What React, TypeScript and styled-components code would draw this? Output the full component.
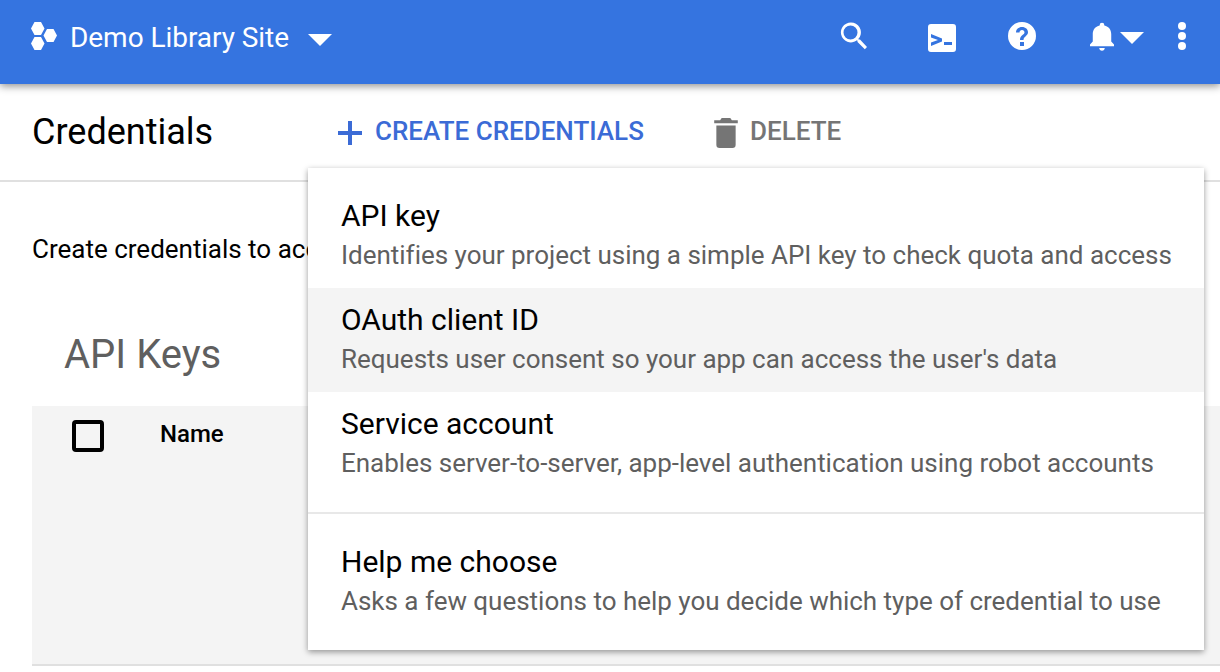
import React from 'react';
import styled, { createGlobalStyle } from 'styled-components';

const GlobalStyle = createGlobalStyle`
  html, body { margin: 0; padding: 0; background: #fff; }
  body { font-family: Roboto, "Liberation Sans", sans-serif; overflow: hidden; }
`;

const Page = styled.div`
  position: relative;
  width: 1220px;
  height: 672px;
  overflow: hidden;
`;

const Header = styled.header`
  position: relative;
  z-index: 2;
  display: flex;
  align-items: center;
  height: 84px;
  padding: 0 34px 12px 31px;
  box-sizing: border-box;
  background: #3574e0;
  box-shadow: 0 2px 8px rgba(0, 0, 0, 0.45);
  color: #fff;
`;

const SiteName = styled.span`
  margin: 4px 0 0 13px;
  font-size: 28px;
  line-height: 32px;
  letter-spacing: -0.05px;
`;

const HeaderActions = styled.div`
  display: flex;
  align-items: center;
  margin-left: auto;
`;

const HeaderIcon = styled.svg<{ $ml: number; $mt?: number }>`
  display: block;
  margin-left: ${(p) => p.$ml}px;
  margin-top: ${(p) => p.$mt ?? 0}px;
  fill: #fff;
`;

const Toolbar = styled.div`
  display: flex;
  align-items: center;
  height: 98px;
  padding: 0 0 2px 32px;
  box-sizing: border-box;
  border-bottom: 2px solid #e0e0e0;
`;

const Title = styled.h1`
  width: 306px;
  margin: 2px 0 0;
  font-size: 36px;
  font-weight: 400;
  color: #000;
`;

const ToolButton = styled.div<{ $color: string; $width: number }>`
  display: flex;
  align-items: center;
  width: ${(p) => p.$width}px;
  font-size: 26px;
  font-weight: 500;
  color: ${(p) => p.$color};
`;

const ToolIcon = styled.svg<{ $color: string }>`
  display: block;
  margin-top: 3px;
  fill: ${(p) => p.$color};
`;

const ToolLabel = styled.span<{ $ml: number }>`
  margin-left: ${(p) => p.$ml}px;
`;

const Content = styled.main`
  padding: 51px 0 0 32px;
`;

const Intro = styled.p`
  margin: 0;
  font-size: 26px;
  line-height: 32px;
  color: #000;
`;

const SectionTitle = styled.h2`
  margin: 66px 0 0 32px;
  font-size: 40px;
  line-height: 48px;
  font-weight: 400;
  color: #5f5f5f;
`;

const KeysTable = styled.div`
  display: flex;
  align-items: flex-start;
  height: 260px;
  margin-top: 27px;
  padding: 14px 0 0 40px;
  box-sizing: border-box;
  background: #f4f4f4;
  border-bottom: 2px solid #e0e0e0;
`;

const Check = styled.div`
  width: 32px;
  height: 32px;
  box-sizing: border-box;
  border: 4px solid #000;
  border-radius: 4px;
`;

const ColumnName = styled.div`
  margin-left: 56px;
  font-size: 24px;
  line-height: 28px;
  font-weight: 500;
  color: #000;
`;

const Menu = styled.div`
  position: absolute;
  z-index: 3;
  top: 168px;
  left: 308px;
  width: 896px;
  height: 482px;
  padding-top: 16px;
  box-sizing: border-box;
  background: #fff;
  box-shadow: 0 2px 6px rgba(0, 0, 0, 0.4);
`;

const MenuItem = styled.div<{ $active?: boolean }>`
  height: 104px;
  padding: 16px 0 0 33px;
  box-sizing: border-box;
  background: ${(p) => (p.$active ? '#f4f4f4' : 'transparent')};
`;

const ItemTitle = styled.div`
  font-size: 30px;
  line-height: 32px;
  color: #000;
`;

const ItemHint = styled.div`
  margin-top: 7px;
  font-size: 26px;
  line-height: 32px;
  letter-spacing: -0.015px;
  color: #5f5f5f;
`;

const MenuDivider = styled.div`
  height: 2px;
  margin: 16px 0 16px;
  background: #e8e8e8;
`;

const Caret = ({ ml, mt }: { ml: number; mt: number }) => (
  <HeaderIcon $ml={ml} $mt={mt} width="24" height="12" viewBox="0 0 24 12">
    <path d="M0 0h24L12 12z" />
  </HeaderIcon>
);

const App = () => (
  <Page>
    <GlobalStyle />
    <Header>
      <HeaderIcon $ml={0} width="26" height="28" viewBox="0 0 26 28">
        <path d="M3.500 0h6.500l3.500 6.500-3.500 6.500H3.500L0 6.500zM16 7h6.500l3.500 6.500-3.500 6.500H16l-3.500-6.500zM3.500 15h6.500l3.500 6.500-3.500 6.500H3.500L0 21.500z" />
      </HeaderIcon>
      <SiteName>Demo Library Site</SiteName>
      <Caret ml={19} mt={8} />
      <HeaderActions>
        <HeaderIcon $ml={0} width="28" height="28" viewBox="0 0 28 28">
          <path d="M20 17.500h-1.300l-.4-.4A10 10 0 1 0 17 18.300l.5.4V20l7.300 7.300 2.200-2.200zM10.500 17.500a7 7 0 1 1 0-14 7 7 0 0 1 0 14z" />
        </HeaderIcon>
        <HeaderIcon $ml={60} $mt={4} width="28" height="28" viewBox="0 0 28 28">
          <path fillRule="evenodd" d="M3 0h22a3 3 0 0 1 3 3v22a3 3 0 0 1-3 3H3a3 3 0 0 1-3-3V3a3 3 0 0 1 3-3zM3 10v3.500l7 2.500-7 2.500V22l11-4.500v-3zM16 18v3h8v-3z" />
        </HeaderIcon>
        <HeaderIcon $ml={52} width="28" height="28" viewBox="0 0 28 28">
          <path fillRule="evenodd" d="M14 0a14 14 0 1 1 0 28 14 14 0 0 1 0-28zM12 20v4h4v-4zM14 5c-3.600 0-6 2.400-6 5.500h3.500c0-1.400 1-2.500 2.500-2.500s2.500 1 2.500 2.300c0 2.700-4.500 2.700-4.500 7.700h3.500c0-3.700 4.500-4.100 4.500-7.800C20 7.300 17.600 5 14 5z" />
        </HeaderIcon>
        <HeaderIcon $ml={54} $mt={2} width="24" height="30" viewBox="0 0 26 30">
          <path d="M13 30c1.700 0 3-1.300 3-3h-6c0 1.700 1.300 3 3 3zM23 20v-8c0-4.700-2.600-8.500-7.500-9.500V2a2.500 2.500 0 0 0-5 0v.5C5.600 3.500 3 7.300 3 12v8l-3 3v2h26v-2z" />
        </HeaderIcon>
        <Caret ml={6} mt={4} />
        <HeaderIcon $ml={34} width="8" height="28" viewBox="0 0 8 28">
          <circle cx="4" cy="4" r="4" />
          <circle cx="4" cy="14" r="4" />
          <circle cx="4" cy="24" r="4" />
        </HeaderIcon>
      </HeaderActions>
    </Header>
    <Toolbar>
      <Title>Credentials</Title>
      <ToolButton $color="#3b6bd6" $width={376}>
        <ToolIcon $color="#3b6bd6" width="24" height="24" viewBox="0 0 24 24">
          <path d="M10 0h4v10h10v4H14v10h-4V14H0v-4h10z" />
        </ToolIcon>
        <ToolLabel $ml={13}>CREATE CREDENTIALS</ToolLabel>
      </ToolButton>
      <ToolButton $color="#757575" $width={200}>
        <ToolIcon $color="#757575" width="24" height="30" viewBox="0 0 22 28">
          <path d="M2 25a3 3 0 0 0 3 3h12a3 3 0 0 0 3-3V7H2zM22 2h-5.500l-1.500-2H7L5.500 2H0v3h22z" />
        </ToolIcon>
        <ToolLabel $ml={12}>DELETE</ToolLabel>
      </ToolButton>
    </Toolbar>
    <Content>
      <Intro>Create credentials to access your enabled APIs</Intro>
      <SectionTitle>API Keys</SectionTitle>
      <KeysTable>
        <Check />
        <ColumnName>Name</ColumnName>
      </KeysTable>
    </Content>
    <Menu>
      <MenuItem>
        <ItemTitle>API key</ItemTitle>
        <ItemHint>Identifies your project using a simple API key to check quota and access</ItemHint>
      </MenuItem>
      <MenuItem $active>
        <ItemTitle>OAuth client ID</ItemTitle>
        <ItemHint>Requests user consent so your app can access the user's data</ItemHint>
      </MenuItem>
      <MenuItem>
        <ItemTitle>Service account</ItemTitle>
        <ItemHint>Enables server-to-server, app-level authentication using robot accounts</ItemHint>
      </MenuItem>
      <MenuDivider />
      <MenuItem>
        <ItemTitle>Help me choose</ItemTitle>
        <ItemHint>Asks a few questions to help you decide which type of credential to use</ItemHint>
      </MenuItem>
    </Menu>
  </Page>
);

export default App;
